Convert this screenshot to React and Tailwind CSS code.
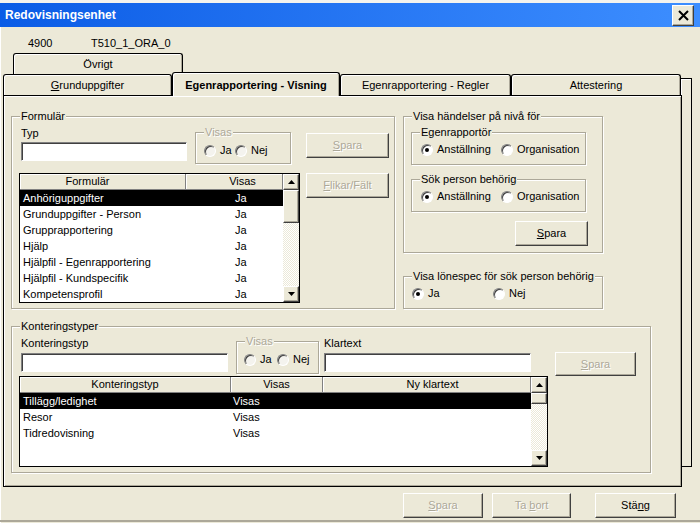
import React from 'react';

// Win2k/XP-style dialog: "Redovisningsenhet"

const raised = 'bg-[#ece9d8] border border-t-white border-l-white border-r-[#404040] border-b-[#404040] shadow-[inset_-1px_-1px_0_#aca899]';
const sunken = 'bg-white border border-t-[#808080] border-l-[#808080] border-r-white border-b-white shadow-[inset_1px_1px_0_#404040]';

function Btn({ children, disabled, className = '' }) {
  return (
    <div className={`flex items-center justify-center ${raised} ${disabled ? 'text-[#aca899] [text-shadow:1px_1px_0_#fff]' : 'text-black'} ${className}`}>
      {children}
    </div>
  );
}

function Group({ label, disabled, className = '', children }) {
  return (
    <div className={`relative border border-[#aca899] shadow-[inset_1px_1px_0_#fff,1px_1px_0_#fff] ${className}`}>
      <span className={`absolute -top-[7px] left-[8px] px-[1px] bg-[#ece9d8] leading-[13px] whitespace-nowrap ${disabled ? 'text-[#aca899] [text-shadow:1px_1px_0_#fff]' : ''}`}>
        {label}
      </span>
      {children}
    </div>
  );
}

function Radio({ label, checked, disabled, className = '' }) {
  return (
    <div className={`flex items-center ${className}`}>
      <span className={`w-[12px] h-[12px] shrink-0 rounded-full flex items-center justify-center border border-t-[#808080] border-l-[#808080] border-b-white border-r-white shadow-[inset_1px_1px_0_#404040] ${disabled ? 'bg-[#f4f3ee]' : 'bg-white'}`}>
        {checked && <span className="w-[4px] h-[4px] rounded-full bg-black" />}
      </span>
      <span className="ml-[4px] whitespace-nowrap">{label}</span>
    </div>
  );
}

function Input({ className = '' }) {
  return <div className={`${sunken} ${className}`} />;
}

function Arrow({ down }) {
  return (
    <div className={`w-[16px] h-[16px] shrink-0 flex items-center justify-center ${raised}`}>
      <svg width="7" height="4" viewBox="0 0 7 4">
        {down ? <polygon points="0,0 7,0 3.5,4" fill="#000" /> : <polygon points="0,4 7,4 3.5,0" fill="#000" />}
      </svg>
    </div>
  );
}

function Scrollbar({ thumb }) {
  return (
    <div className="w-[16px] shrink-0 flex flex-col [background-image:repeating-conic-gradient(#ece9d8_0%_25%,#ffffff_0%_50%)] [background-size:2px_2px]">
      <Arrow />
      <div className={`w-[16px] shrink-0 ${raised} ${thumb}`} />
      <div className="flex-1" />
      <Arrow down />
    </div>
  );
}

function ListBox({ cols, rows, thumb, className = '' }) {
  return (
    <div className={`flex border border-black bg-white ${className}`}>
      <div className="flex-1 flex flex-col overflow-hidden">
        <div className="flex h-[16px] shrink-0">
          {cols.map((c) => (
            <div
              key={c.label}
              className={`${c.w} ${c.hc} shrink-0 h-[16px] flex items-center bg-[#ece9d8] border-r border-b border-[#808080] shadow-[inset_1px_1px_0_#fff] whitespace-nowrap`}
            >
              {c.label}
            </div>
          ))}
        </div>
        {rows.map((r, i) => (
          <div key={i} className={`flex h-[16px] shrink-0 items-center ${i === 0 ? 'bg-black text-white' : ''}`}>
            {r.map((t, j) => (
              <div key={j} className={`${cols[j].w} ${cols[j].cc} shrink-0 whitespace-nowrap overflow-hidden`}>
                {t}
              </div>
            ))}
          </div>
        ))}
      </div>
      <Scrollbar thumb={thumb} />
    </div>
  );
}

function Tab({ children, selected, className = '' }) {
  return (
    <div
      className={`flex items-center justify-center bg-[#ece9d8] border-t border-l border-r border-black rounded-t-[3px] shadow-[inset_1px_1px_0_#fff,inset_-1px_0_0_#aca899] whitespace-nowrap ${selected ? 'font-bold relative z-10' : ''} ${className}`}
    >
      {children}
    </div>
  );
}

const formCols = [
  { label: 'Formulär', w: 'w-[166px]', hc: 'justify-center pr-[30px]', cc: 'pl-[3px]' },
  { label: 'Visas', w: 'w-[97px]', hc: 'justify-center pl-[17px]', cc: 'pl-[49px]' },
];

const formRows = [
  ['Anhöriguppgifter', 'Ja'],
  ['Grunduppgifter - Person', 'Ja'],
  ['Grupprapportering', 'Ja'],
  ['Hjälp', 'Ja'],
  ['Hjälpfil - Egenrapportering', 'Ja'],
  ['Hjälpfil - Kundspecifik', 'Ja'],
  ['Kompetensprofil', 'Ja'],
];

const kontCols = [
  { label: 'Konteringstyp', w: 'w-[211px]', hc: 'justify-center', cc: 'pl-[3px]' },
  { label: 'Visas', w: 'w-[92px]', hc: 'justify-center', cc: 'pl-[2px]' },
  { label: 'Ny klartext', w: 'w-[208px]', hc: 'justify-center pl-[12px]', cc: '' },
];

const kontRows = [
  ['Tillägg/ledighet', 'Visas', ''],
  ['Resor', 'Visas', ''],
  ['Tidredovisning', 'Visas', ''],
];

export default function App() {
  return (
    <div className="relative w-[700px] h-[523px] overflow-hidden flex flex-col bg-[#ece9d8] text-black text-[11px] leading-[13px] font-['Liberation_Sans',Arial,sans-serif] shadow-[inset_1px_0_0_#fff]">
      {/* back row panel edge */}
      <div className="absolute left-[681px] top-[78px] w-[11px] h-[389px] border-t border-r border-b border-black shadow-[inset_1px_1px_0_#fff]" />

      <div className="h-[3px] shrink-0 bg-[#f4f3ee]" />

      {/* title bar */}
      <div className="h-[24px] shrink-0 flex items-center pl-[5px] pr-[6px] bg-gradient-to-r from-[#0a5ce6] to-[#3d8eff]">
        <span className="text-white font-bold text-[12px] leading-[15px]">Redovisningsenhet</span>
        <div className={`ml-auto w-[22px] h-[21px] flex items-center justify-center ${raised}`}>
          <svg width="11" height="11" viewBox="0 0 11 11">
            <path d="M1 1 L10 10 M10 1 L1 10" stroke="#000" strokeWidth="2" />
          </svg>
        </div>
      </div>

      {/* info row */}
      <div className="h-[26px] shrink-0 flex pt-[10px]">
        <span className="ml-[28px] w-[63px]">4900</span>
        <span>T510_1_ORA_0</span>
      </div>

      {/* back tab row */}
      <div className="h-[21px] shrink-0 flex">
        <Tab className="ml-[13px] w-[170px] h-[21px]">Övrigt</Tab>
      </div>

      {/* front tab row */}
      <div className="h-[21px] shrink-0 flex items-end relative z-10">
        <Tab className="ml-[3px] w-[169px] h-[21px]">
          <span className="underline underline-offset-[1px]">G</span>runduppgifter
        </Tab>
        <Tab selected className="w-[168px] h-[24px] self-start -mt-[2px] pt-[1px]">
          Egenrapportering - Visning
        </Tab>
        <Tab className="w-[171px] h-[21px]">Egenrapportering - Regler</Tab>
        <Tab className="w-[170px] h-[21px]">Attestering</Tab>
      </div>

      {/* panel */}
      <div className="relative shrink-0 ml-[3px] w-[679px] h-[392px] border border-black shadow-[inset_1px_1px_0_#fff,inset_-1px_-1px_0_#aca899]">
        <div className="pl-[7px] pt-[20px]">
          <div className="flex items-start">
            {/* Formulär */}
            <Group label="Formulär" className="w-[384px] h-[193px]">
              <div className="flex">
                <div className="ml-[7px] pt-[10px] w-[281px]">
                  <div className="flex items-start">
                    <div className="ml-[2px]">
                      <div>Typ</div>
                      <Input className="mt-[2px] w-[166px] h-[19px]" />
                    </div>
                    <Group label="Visas" disabled className="ml-[8px] mt-[5px] w-[96px] h-[32px]">
                      <div className="flex pl-[8px] pt-[11px]">
                        <Radio label="Ja" disabled className="w-[31px]" />
                        <Radio label="Nej" disabled />
                      </div>
                    </Group>
                  </div>
                  <ListBox cols={formCols} rows={formRows} thumb="h-[33px]" className="mt-[9px] w-[281px] h-[130px]" />
                </div>
                <div className="ml-[6px] mt-[16px] flex flex-col gap-[15px]">
                  <Btn disabled className="w-[83px] h-[25px]">
                    <span className="underline underline-offset-[1px]">S</span>para
                  </Btn>
                  <Btn disabled className="w-[83px] h-[25px]">
                    <span className="underline underline-offset-[1px]">F</span>likar/Fält
                  </Btn>
                </div>
              </div>
            </Group>

            {/* right column */}
            <div className="ml-[8px] flex flex-col">
              <Group label="Visa händelser på nivå för" className="w-[200px] h-[137px]">
                <Group label="Egenrapportör" className="ml-[7px] mt-[15px] w-[175px] h-[33px]">
                  <div className="flex pl-[9px] pt-[10px]">
                    <Radio label="Anställning" checked className="w-[80px]" />
                    <Radio label="Organisation" />
                  </div>
                </Group>
                <Group label="Sök person behörig" className="ml-[7px] mt-[14px] w-[175px] h-[33px]">
                  <div className="flex pl-[9px] pt-[10px]">
                    <Radio label="Anställning" checked className="w-[80px]" />
                    <Radio label="Organisation" />
                  </div>
                </Group>
                <Btn className="ml-[111px] mt-[9px] w-[73px] h-[25px]">
                  <span className="underline underline-offset-[1px]">S</span>para
                </Btn>
              </Group>
              <Group label="Visa lönespec för sök person behörig" className="mt-[23px] w-[200px] h-[33px]">
                <div className="flex pl-[8px] pt-[10px]">
                  <Radio label="Ja" checked className="w-[81px]" />
                  <Radio label="Nej" />
                </div>
              </Group>
            </div>
          </div>

          {/* Konteringstyper */}
          <Group label="Konteringstyper" className="mt-[17px] w-[640px] h-[147px]">
            <div className="flex items-start">
              <div className="ml-[9px] pt-[10px]">
                <div>Konteringstyp</div>
                <Input className="mt-[3px] w-[207px] h-[19px]" />
              </div>
              <Group label="Visas" disabled className="ml-[8px] mt-[14px] w-[83px] h-[33px]">
                <div className="flex pl-[7px] pt-[11px]">
                  <Radio label="Ja" disabled className="w-[33px]" />
                  <Radio label="Nej" disabled />
                </div>
              </Group>
              <div className="ml-[5px] pt-[10px]">
                <div>Klartext</div>
                <Input className="mt-[3px] w-[207px] h-[19px]" />
              </div>
              <Btn disabled className="ml-[24px] mt-[25px] w-[81px] h-[24px]">
                <span className="underline underline-offset-[1px]">S</span>para
              </Btn>
            </div>
            <ListBox cols={kontCols} rows={kontRows} thumb="h-[11px]" className="ml-[7px] w-[529px] h-[91px]" />
          </Group>
        </div>
      </div>

      {/* bottom buttons */}
      <div className="h-[33px] shrink-0 flex items-start pt-[6px]">
        <Btn disabled className="ml-[403px] w-[80px] h-[25px]">
          <span className="underline underline-offset-[1px]">S</span>para
        </Btn>
        <Btn disabled className="ml-[9px] w-[79px] h-[25px]">
          Ta&nbsp;<span className="underline underline-offset-[1px]">b</span>ort
        </Btn>
        <Btn className="ml-[24px] w-[81px] h-[25px]">
          Stä<span className="underline underline-offset-[1px]">n</span>g
        </Btn>
      </div>
      <div className="h-[2px] shrink-0 bg-[#aca899]" />
    </div>
  );
}
